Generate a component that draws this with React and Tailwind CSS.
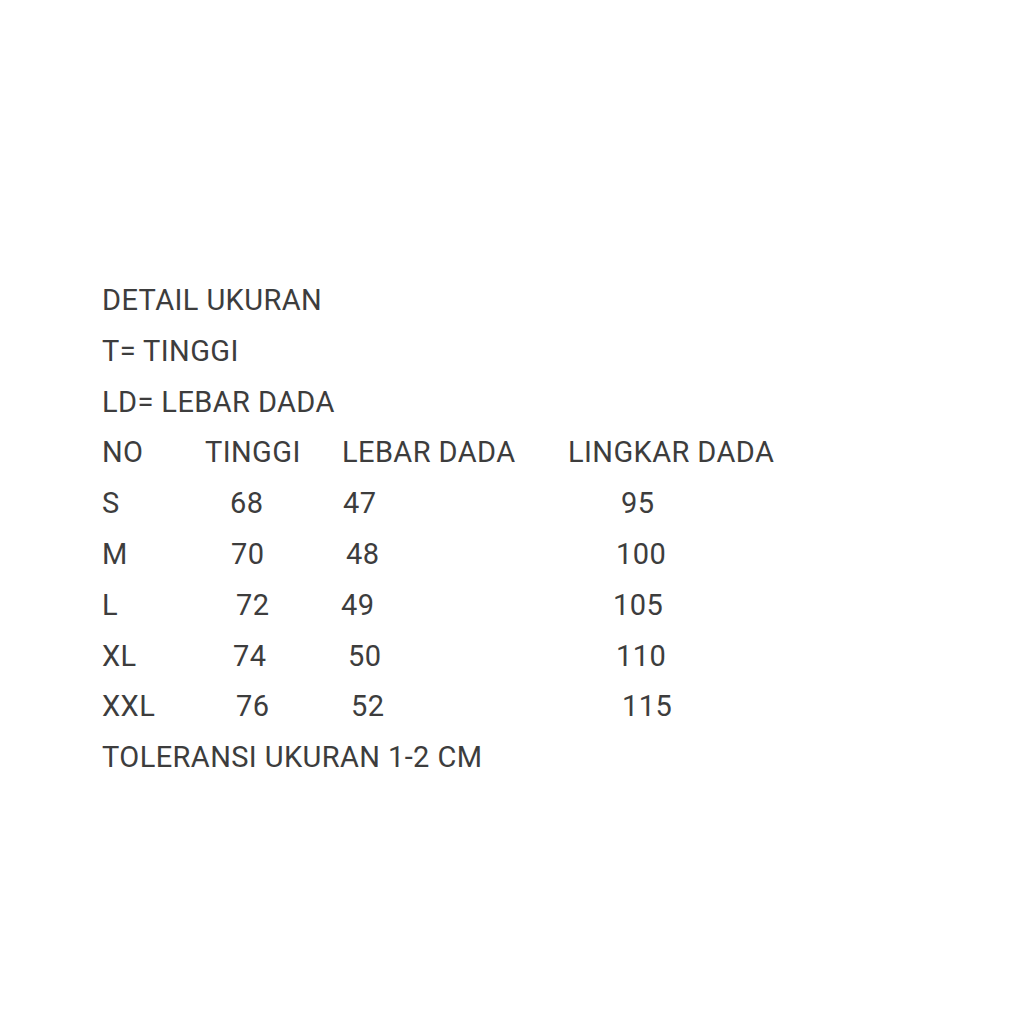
import React from 'react'

export default function App() {
  return (
    <div className="min-h-[1024px] w-[1024px] bg-white text-[#3d3d3d] font-['Roboto',_'Liberation_Sans',_sans-serif] text-[29px] tracking-[0.4px] leading-[50.8px]">
      <div className="pl-[102px] pt-[275px]">
        <p>DETAIL UKURAN</p>
        <p>T= TINGGI</p>
        <p>LD= LEBAR DADA</p>

        {/* header row */}
        <div className="flex whitespace-nowrap">
          <span className="w-[103px]">NO</span>
          <span className="w-[137px]">TINGGI</span>
          <span className="w-[226px]">LEBAR DADA</span>
          <span>LINGKAR DADA</span>
        </div>

        <div className="flex whitespace-nowrap">
          <span className="w-[128px]">S</span>
          <span className="w-[113px]">68</span>
          <span className="w-[278px]">47</span>
          <span>95</span>
        </div>
        <div className="flex whitespace-nowrap">
          <span className="w-[129px]">M</span>
          <span className="w-[115px]">70</span>
          <span className="w-[270px]">48</span>
          <span>100</span>
        </div>
        <div className="flex whitespace-nowrap">
          <span className="w-[134px]">L</span>
          <span className="w-[105px]">72</span>
          <span className="w-[272px]">49</span>
          <span>105</span>
        </div>
        <div className="flex whitespace-nowrap">
          <span className="w-[131px]">XL</span>
          <span className="w-[115px]">74</span>
          <span className="w-[268px]">50</span>
          <span>110</span>
        </div>
        <div className="flex whitespace-nowrap">
          <span className="w-[134px]">XXL</span>
          <span className="w-[115px]">76</span>
          <span className="w-[271px]">52</span>
          <span>115</span>
        </div>

        <p>TOLERANSI UKURAN 1-2 CM</p>
      </div>
    </div>
  )
}
